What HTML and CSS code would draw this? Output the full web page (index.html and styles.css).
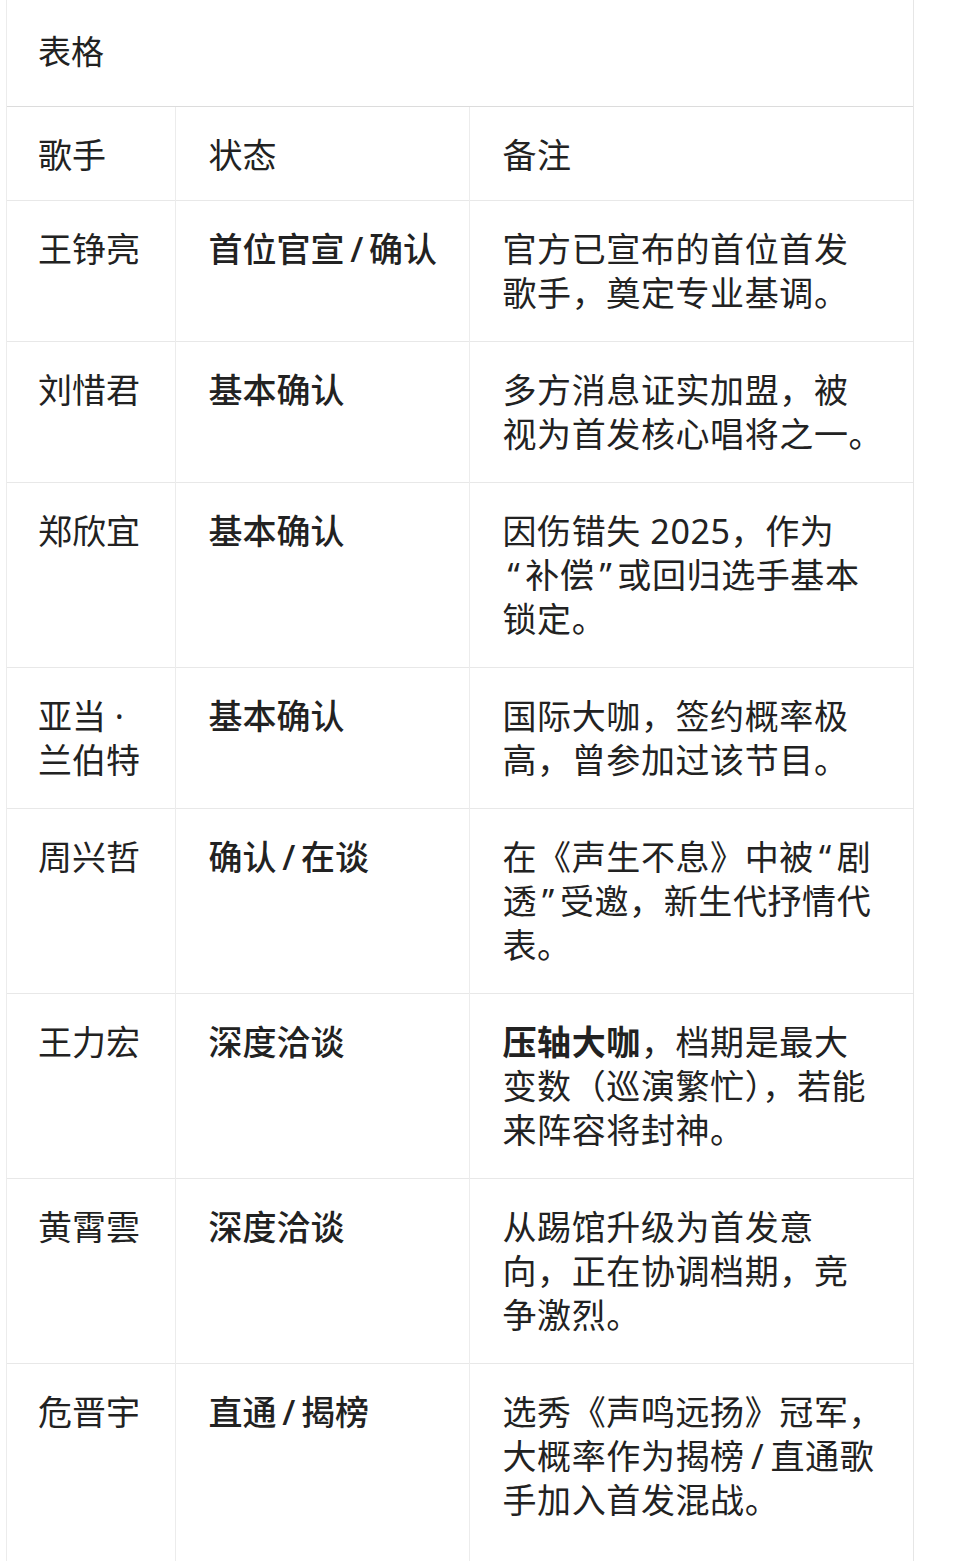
FILE: index.html
```html
<!DOCTYPE html>
<html lang="zh-CN">
<head>
<meta charset="utf-8">
<title>表格</title>
<link rel="stylesheet" href="styles.css">
</head>
<body>
<div class="card">
  <div class="title">表格</div>
  <table class="grid">
    <colgroup>
      <col class="c1"><col class="c2"><col class="c3">
    </colgroup>
    <thead>
      <tr><th>歌手</th><th>状态</th><th class="note">备注</th></tr>
    </thead>
    <tbody>
      <tr><td>王铮亮</td><td class="st">首位官宣&thinsp;/&thinsp;确认</td><td class="note">官方已宣布的首位首发<br>歌手，奠定专业基调。</td></tr>
      <tr><td>刘惜君</td><td class="st">基本确认</td><td class="note">多方消息证实加盟，被<br>视为首发核心唱将之一。</td></tr>
      <tr><td>郑欣宜</td><td class="st">基本确认</td><td class="note">因伤错失 2025，作为<br><span class="q">“</span>补偿<span class="q">”</span>或回归选手基本<br>锁定。</td></tr>
      <tr><td>亚当 ·<br>兰伯特</td><td class="st">基本确认</td><td class="note">国际大咖，签约概率极<br>高，曾参加过该节目。</td></tr>
      <tr><td>周兴哲</td><td class="st">确认&thinsp;/&thinsp;在谈</td><td class="note">在《声生不息》中被<span class="q">“</span>剧<br>透<span class="q">”</span>受邀，新生代抒情代<br>表。</td></tr>
      <tr><td>王力宏</td><td class="st">深度洽谈</td><td class="note"><strong>压轴大咖</strong>，档期是最大<br>变数（巡演繁忙），若能<br>来阵容将封神。</td></tr>
      <tr><td>黄霄雲</td><td class="st">深度洽谈</td><td class="note">从踢馆升级为首发意<br>向，正在协调档期，竞<br>争激烈。</td></tr>
      <tr class="last"><td>危晋宇</td><td class="st">直通&thinsp;/&thinsp;揭榜</td><td class="note">选秀《声鸣远扬》冠军，<br>大概率作为揭榜&thinsp;/&thinsp;直通歌<br>手加入首发混战。</td></tr>
    </tbody>
  </table>
</div>
</body>
</html>
```
FILE: styles.css
```css
html, body {
  margin: 0;
  padding: 0;
  background: #ffffff;
}
body {
  font-family: "Noto Sans", "Noto Sans CJK SC", sans-serif;
  color: #222222;
  font-size: 34px;
  line-height: 44px;
}
.card {
  margin-left: 6px;
  width: 906px;
  border-left: 1px solid #ececec;
  border-right: 1px solid #e6e6e6;
}
.title {
  font-size: 33px;
  padding: 30px 0 32px 31px;
  height: 44px;
}
.grid {
  width: 100%;
  border-collapse: collapse;
  table-layout: fixed;
}
.c1 { width: 168px; }
.c2 { width: 294px; }
.c3 { width: 444px; }
.grid th,
.grid td {
  text-align: left;
  vertical-align: top;
  font-weight: 400;
  padding: 26px 6px 26px 33px;
  border-top: 1px solid #e8e8e8;
  border-left: 1px solid #ececec;
  white-space: nowrap;
}
.grid thead th {
  border-top: 1px solid #dcdcdc;
  padding-top: 26px;
  padding-bottom: 23px;
}
.grid th:first-child,
.grid td:first-child {
  border-left: none;
  padding-left: 31px;
}
.grid .note {
  letter-spacing: 0.6px;
}
.grid .q {
  padding: 0 5px;
}
.grid td.st {
  font-weight: 500;
}
.grid strong {
  font-weight: 700;
}
.grid tr.last td {
  padding-bottom: 60px;
}
```
